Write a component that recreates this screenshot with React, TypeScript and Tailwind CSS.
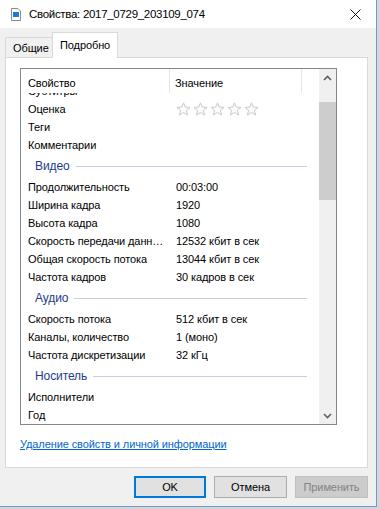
import React from "react";

type Row = { k?: string; v?: string; group?: string; stars?: boolean };

const rows: Row[] = [
  { k: "Субтитры" },
  { k: "Оценка", stars: true },
  { k: "Теги" },
  { k: "Комментарии" },
  { group: "Видео" },
  { k: "Продолжительность", v: "00:03:00" },
  { k: "Ширина кадра", v: "1920" },
  { k: "Высота кадра", v: "1080" },
  { k: "Скорость передачи данн…", v: "12532 кбит в сек" },
  { k: "Общая скорость потока", v: "13044 кбит в сек" },
  { k: "Частота кадров", v: "30 кадров в сек" },
  { group: "Аудио" },
  { k: "Скорость потока", v: "512 кбит в сек" },
  { k: "Каналы, количество", v: "1 (моно)" },
  { k: "Частота дискретизации", v: "32 кГц" },
  { group: "Носитель" },
  { k: "Исполнители" },
  { k: "Год" },
];

const Star = () => (
  <svg width="15" height="14" viewBox="0 0 15 14" className="mr-[2px]">
    <path
      d="M7.5 0.8 L9.3 5.1 L14 5.4 L10.4 8.4 L11.6 13 L7.5 10.5 L3.4 13 L4.6 8.4 L1 5.4 L5.7 5.1 Z"
      fill="#fbfbfb"
      stroke="#c9c9c9"
      strokeWidth="1"
      strokeLinejoin="round"
    />
  </svg>
);

const Chevron = ({ up }: { up?: boolean }) => (
  <svg width="9" height="6" viewBox="0 0 9 6">
    <path
      d={up ? "M1 5 L4.5 1.5 L8 5" : "M1 1 L4.5 4.5 L8 1"}
      fill="none"
      stroke="#606060"
      strokeWidth="1.6"
    />
  </svg>
);

export default function App() {
  return (
    <div
      className="w-[380px] h-[509px] bg-[#d6d6d6] overflow-hidden text-[11px] leading-[16px] tracking-[-0.1px] text-black"
      style={{ fontFamily: '"Liberation Sans", Arial, sans-serif' }}
    >
      <div className="w-[377px] h-[507px] flex flex-col bg-[#f0f0f0] border-r border-b border-[#6b9bd1]">
        {/* title bar */}
        <div className="h-[28px] bg-white flex items-center shrink-0">
          <svg width="10" height="13" viewBox="0 0 10 13" className="ml-[11px] mr-[8px]">
            <path d="M0.5 0.5 H7 L9.5 3 V12.5 H0.5 Z" fill="#fff" stroke="#8a8a8a" />
            <rect x="2" y="4" width="6" height="5" fill="#1e78d4" />
          </svg>
          <span className="flex-1 text-[11.5px] tracking-[-0.3px]">Свойства: 2017_0729_203109_074</span>
          <svg width="11" height="11" viewBox="0 0 11 11" className="mr-[15px]">
            <path d="M0.5 0.5 L10.5 10.5 M10.5 0.5 L0.5 10.5" stroke="#111" strokeWidth="1" />
          </svg>
        </div>

        {/* tabs */}
        <div className="flex items-end pl-[5px] h-[29px] shrink-0">
          <div className="h-[20px] w-[48px] border border-b-0 border-[#d9d9d9] bg-[#f0f0f0] flex items-center pl-[7px] whitespace-nowrap">
            Общие
          </div>
          <div className="relative z-10 -mb-px -ml-px h-[26px] w-[66px] border border-b-0 border-[#d9d9d9] bg-white flex items-center pl-[7px] pb-[2px] whitespace-nowrap">
            Подробно
          </div>
        </div>

        {/* panel */}
        <div className="ml-[5px] w-[363px] h-[411px] border border-[#d9d9d9] bg-white flex flex-col pl-[14px] pt-[10px] shrink-0">
          <div className="w-[317px] h-[357px] border border-[#828790] flex">
            <div className="flex-1 flex flex-col overflow-hidden">
              <div className="h-[24px] flex items-stretch shrink-0 bg-white relative z-10">
                <div className="w-[148px] pl-[7px] pt-[3px] flex items-center">Свойство</div>
                <div className="w-px bg-[#e5e5e5]" />
                <div className="w-[131px] pl-[5px] pt-[3px] flex items-center">Значение</div>
                <div className="w-px bg-[#e5e5e5]" />
              </div>
              <div className="flex-1 overflow-hidden">
                <div className="-mt-[11px]">
                  {rows.map((r, i) =>
                    r.group ? (
                      <div key={i} className="h-[24px] flex items-center pl-[14px] pr-[12px]">
                        <span className="text-[#1e3a8c] text-[12px]">{r.group}</span>
                        <div className="flex-1 h-px bg-[#c3d0e2] ml-[6px]" />
                      </div>
                    ) : (
                      <div key={i} className="h-[18px] flex items-center">
                        <div className="w-[149px] pl-[7px] pr-[2px] truncate">{r.k}</div>
                        <div className="pl-[6px] flex items-center">
                          {r.stars ? (
                            <>
                              <Star />
                              <Star />
                              <Star />
                              <Star />
                              <Star />
                            </>
                          ) : (
                            r.v
                          )}
                        </div>
                      </div>
                    )
                  )}
                </div>
              </div>
            </div>
            {/* scrollbar */}
            <div className="w-[17px] bg-[#f0f0f0] flex flex-col">
              <div className="h-[17px] flex items-center justify-center">
                <Chevron up />
              </div>
              <div className="flex-1 pt-[16px]">
                <div className="h-[98px] bg-[#cdcdcd]" />
              </div>
              <div className="h-[17px] flex items-center justify-center">
                <Chevron />
              </div>
            </div>
          </div>
          <div className="mt-[11px]">
            <span className="text-[#0066cc] underline">Удаление свойств и личной информации</span>
          </div>
        </div>

        {/* buttons */}
        <div className="flex justify-end gap-[8px] pr-[8px] mt-[8px]">
          <button className="w-[72px] h-[22px] border-2 border-[#0078d7] bg-[#e1e1e1]">OK</button>
          <button className="w-[73px] h-[22px] border border-[#adadad] bg-[#e1e1e1]">Отмена</button>
          <button className="w-[73px] h-[22px] border border-[#bfbfbf] bg-[#cccccc] text-[#838383]">
            Применить
          </button>
        </div>
      </div>
    </div>
  );
}
